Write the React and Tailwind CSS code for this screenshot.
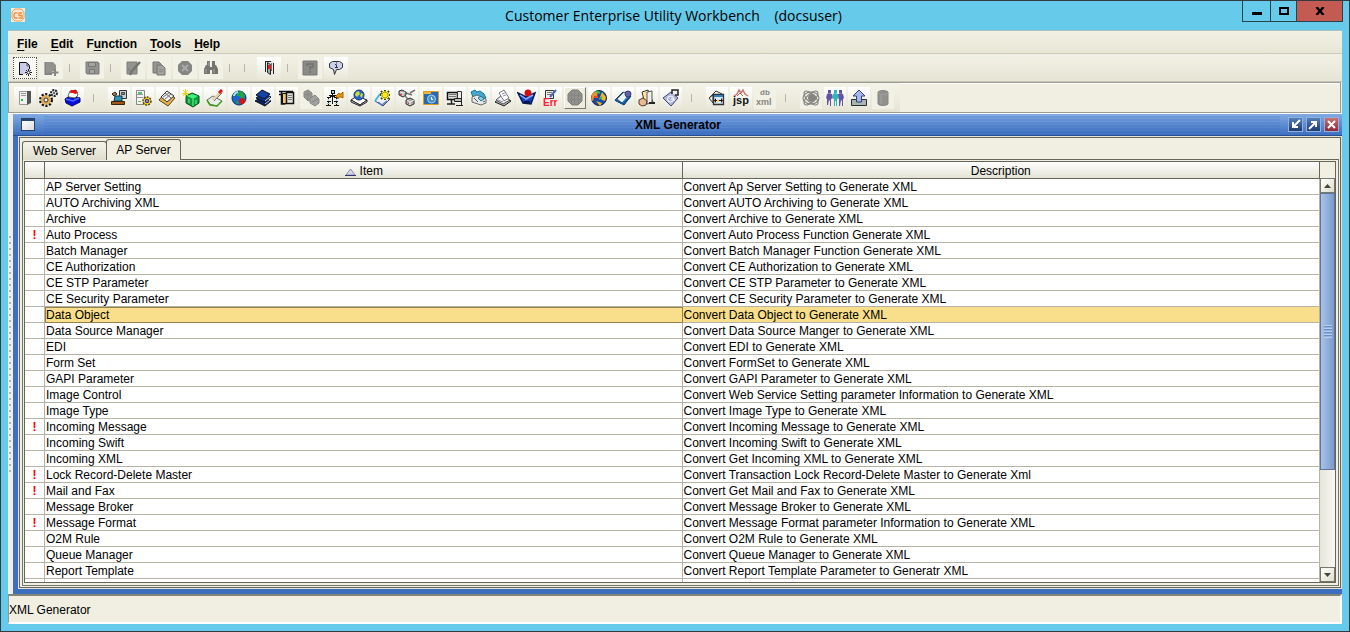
import React from 'react';

const rows = [
  ['', 'AP Server Setting', 'Convert Ap Server Setting to Generate XML'],
  ['', 'AUTO Archiving XML', 'Convert AUTO Archiving to Generate XML'],
  ['', 'Archive', 'Convert Archive to Generate XML'],
  ['!', 'Auto Process', 'Convert Auto Process Function Generate XML'],
  ['', 'Batch Manager', 'Convert Batch Manager Function Generate XML'],
  ['', 'CE Authorization', 'Convert CE Authorization to Generate XML'],
  ['', 'CE STP Parameter', 'Convert CE STP Parameter to Generate XML'],
  ['', 'CE Security Parameter', 'Convert CE Security Parameter to Generate XML'],
  ['', 'Data Object', 'Convert Data Object to Generate XML'],
  ['', 'Data Source Manager', 'Convert Data Source Manger to Generate XML'],
  ['', 'EDI', 'Convert EDI to Generate XML'],
  ['', 'Form Set', 'Convert FormSet to Generate XML'],
  ['', 'GAPI Parameter', 'Convert GAPI Parameter to Generate XML'],
  ['', 'Image Control', 'Convert Web Service Setting parameter Information to Generate XML'],
  ['', 'Image Type', 'Convert Image Type to Generate XML'],
  ['!', 'Incoming Message', 'Convert Incoming Message to Generate XML'],
  ['', 'Incoming Swift', 'Convert Incoming Swift to Generate XML'],
  ['', 'Incoming XML', 'Convert Get Incoming XML to Generate XML'],
  ['!', 'Lock Record-Delete Master', 'Convert Transaction Lock Record-Delete Master to Generate Xml'],
  ['!', 'Mail and Fax', 'Convert Get Mail and Fax to Generate XML'],
  ['', 'Message Broker', 'Convert Message Broker to Generate XML'],
  ['!', 'Message Format', 'Convert Message Format parameter Information to Generate XML'],
  ['', 'O2M Rule', 'Convert O2M Rule to Generate XML'],
  ['', 'Queue Manager', 'Convert Queue Manager to Generate XML'],
  ['', 'Report Template', 'Convert Report Template Parameter to Generatr XML'],
  ['', '', ''],
];

const S = ({ children }) => (
  <svg viewBox="0 0 20 20" className="size-5 shrink-0" fill="none" aria-hidden="true">{children}</svg>
);

const icons = {
  newDoc: <S><path d="M4 4h8l3 3v9H4z" fill="#c9cbe8" /><path d="M4.500 16V4.500h7l3 3V11" stroke="#111" /><path d="M12 5v3h3" stroke="#555" /><path d="M4 16.500h4" stroke="#111" /><path d="M13.500 11v7M10 14.500h7M11 12l5 5M16 12l-5 5" stroke="#222" /><path d="M12.500 13.500h2v2h-2z" fill="#fff" /></S>,
  addDoc: <S><path d="M4 4h8l3 3v6h-4v4H4z" fill="#92928f" /><path d="M5 16h6M4 4v13" stroke="#777774" /><path d="M14 11v7M10.500 14.500h7" stroke="#858582" strokeWidth="2" /></S>,
  save: <S><path d="M4 4h12l1 1v11H5l-1-1z" fill="#92928f" stroke="#7d7d7a" /><path d="M6.500 4.500h7v4h-7zM7.500 11.500h5v4h-5z" fill="#a5a5a2" stroke="#777774" /></S>,
  editPage: <S><path d="M4 4h10v12H4z" fill="#93938f" stroke="#7d7d7a" /><path d="m17 4-8 9-2 4" stroke="#747471" strokeWidth="2.500" /><path d="m5 10 3 4" stroke="#777774" /></S>,
  copy: <S><path d="M4 4h6l2 2v9H4z" fill="#969693" stroke="#747471" /><path d="M8 7h5l3 3v7H8z" fill="#a2a29f" stroke="#747471" /><path d="M10 11.500h4M10 13.500h4" stroke="#8b8b88" /></S>,
  cancel: <S><path d="M7 3h6l4 4v6l-4 4H7l-4-4V7z" fill="#858582" /><path d="m7 7 6 6M13 7l-6 6" stroke="#aaa" strokeWidth="2" /></S>,
  find: <S><path d="M5 7h4v9H3v-5zM11 7h4l2 4v5h-6zM6 3h3v4H6zM11 3h3v4h-3zM9 9h2v3H9z" fill="#747471" /><path d="M5 11v4M13 11v4M8 4v4" stroke="#aaaaa6" /></S>,
  door: <S><path d="M7 3h8v13H7z" fill="#e9e9e5" /><path d="M6.500 3v11M14.500 5v11M6 3.500h6" stroke="#222" /><path d="m8.500 4.500 3 2v10l-3-2z" fill="#aaa" stroke="#222" /><path d="M12.500 5v8" stroke="#777" /><path d="M9 7h3v4H9z" fill="#d82020" /></S>,
  help: <S><path d="M3 3h14v14H3z" fill="#8b8b88" stroke="#777774" /><path d="M7 8V6h6v3h-3v3M10 13v2" stroke="#72726f" strokeWidth="1.500" /></S>,
  bubble: <S><path d="M6.500 3.500h7l3 2v4l-3 2h-3l-2 5-1-5-4-2v-4z" fill="#cdd0ec" stroke="#333" /><path d="M10.500 4.500v1M10.500 6.500v3M9 6.500h1M9 9.500h3" stroke="#333" /></S>,
  server: <S><path d="M4.500 3.500h8v13h-8z" fill="#f0f0ee" stroke="#999" /><path d="M12 3h4v12l-4 2z" fill="#555" /><path d="M6 5.500h5M6 7.500h5" stroke="#999" /><path d="M6 11h2v2H6z" fill="#15c838" /></S>,
  gears: <S><circle cx="7" cy="12" r="5.500" stroke="#111" strokeWidth="3" strokeDasharray="2 1.500" /><circle cx="7" cy="12" r="5" fill="#dfad58" /><circle cx="7" cy="12" r="2" fill="#fff" stroke="#333" /><circle cx="15" cy="5" r="3" fill="#ddd" stroke="#222" strokeWidth="2" strokeDasharray="2 1" /><circle cx="15" cy="5" r="1" fill="#444" /></S>,
  blueBox: <S><path d="m2 11 6-4 9 3v4l-8 4-6-3z" fill="#0610dc" stroke="#080850" /><path d="m5 8 2-5 6-1 2 5-3 3-6-1z" fill="#fff" stroke="#666" /><path d="m7 5 1-3h5l2 3-3 1-2-1z" fill="#e71313" /><path d="m3 11 7 2 6-3" stroke="#536bff" strokeWidth="1.500" /></S>,
  worker: <S><path d="M10.500 2.500h7v8h-7z" fill="#cdd3d4" stroke="#333" /><path d="M12.500 4.500h3v2h-3z" fill="#819497" stroke="#444" /><path d="m3 6 3-2 2 2-3 2z" fill="#b87842" stroke="#222" /><path d="M6 8h7v5H5z" fill="#3194b4" stroke="#173849" /><path d="M2.500 13.500h13v3h-13z" fill="#a05818" stroke="#3d220c" /></S>,
  serverGear: <S><path d="M3.500 2.500h8v14h-8z" fill="#f4f4f2" stroke="#888" /><path d="M4 6.500h6M4 9.500h6" stroke="#999" /><path d="M5 4h4v2H5zM5 13h3v1H5z" fill="#52c369" /><circle cx="14" cy="13" r="4" fill="#ffdc16" stroke="#59460a" strokeWidth="1.500" strokeDasharray="2 1" /><circle cx="14" cy="13" r="1.500" fill="#fff" stroke="#3838a5" strokeWidth="1.500" /></S>,
  tray: <S><path d="m2 12 7-8 9 6-7 8z" fill="#ebb044" stroke="#564121" /><path d="m4 9 6-6 7 5-7 6z" fill="#eee" stroke="#333" /><path d="m6 9 6-4M8 11l6-5M8 5l6 5" stroke="#777" /></S>,
  greenCube: <S><path d="m5 8 6-3 7 3v7l-6 4-7-4z" fill="#0a9d3a" stroke="#064d22" /><path d="m6 8 6 3 5-3-6-2z" fill="#43ef7c" /><path d="M12 11v7M8 11v4M15 12v4" stroke="#7af79c" /><path d="M4.500 1v8M1 5.500h8M2 2l5 6M7 2 2 8" stroke="#e0d020" /></S>,
  brush: <S><path d="m2 12 6-4 9 5-5 5-8-2z" fill="#e8eee7" stroke="#657064" /><path d="m2 12 3 5 7 1 5-5" stroke="#409e1b" strokeWidth="1.500" /><path d="M8 12 16 4" stroke="#e8cfa8" strokeWidth="3" /><path d="M9 13 17 5" stroke="#777" /><path d="M14 5 17 2" stroke="#e11" strokeWidth="3" /></S>,
  globeDot: <S><circle cx="10" cy="10" r="7" fill="#1868c5" stroke="#0c3062" /><path d="m8 4 5-1 3 4-1 3h-3l-2-2H8zM8 12l2 4-3-1z" fill="#21a34c" /><path d="M5 8c0-2 2-4 4-4" stroke="#a6ecf8" strokeWidth="2" /><circle cx="13" cy="13" r="3" fill="#d71515" /></S>,
  books: <S><path d="m2 13 7-4 9 4-6 5z" fill="#082265" stroke="#111" /><path d="m3 10 7-5 8 4-6 5z" fill="#0a3898" stroke="#111" /><path d="m3 7 6-5 8 4-6 5z" fill="#1244a8" stroke="#111" /><path d="m12 13 5-4M12 16l5-4" stroke="#ccc" /></S>,
  documents: <S><path d="M2 3.500h14M2 6.500h3M4.500 4v12h4" stroke="#111" strokeWidth="1.500" /><path d="M5.500 5.500h4v10h-4z" fill="#f3c95f" stroke="#111" /><path d="M9.500 4.500h7v11h-7z" fill="#e4e4df" stroke="#111" strokeWidth="1.500" /><path d="M11 7.500h4M11 9.500h4M11 11.500h4" stroke="#777" /></S>,
  disabledGears: <S><path d="m3 4 4-2 4 3v6l-4 2-4-4z" fill="#999996" stroke="#858582" /><path d="m9 10 5-3 4 4v4l-4 3-5-3z" fill="#a1a19e" stroke="#858582" /><path d="M7 3v9M4 7l6-1M11 14l6-3" stroke="#858582" /></S>,
  tree: <S><path d="M7.500 3v13M3.500 10v7M11.500 10v7M4 7.500h8M2 9.500h4M9 9.500h4M2 13.500h4M9 13.500h4M1 17.500h5M9 17.500h5" stroke="#111" /><path d="M6 2h4v4H6zM5 7h5v2H5z" fill="#111" /><path d="M7 3h2v2H7zM3 11h1v2H3zM11 11h1v2h-1zM2 15h3v1H2zM10 15h3v1h-3z" fill="#9ed3dc" /><path d="m11 8 3-3v1h2l2-2v6l-2-1h-2l-1 2z" fill="#ed980e" stroke="#a85f00" /></S>,
  globeDisk: <S><path d="m2 12 6-4 10 4-7 5z" fill="#fff" stroke="#222" /><path d="m2 12 9 5 7-5v2l-7 4-9-4z" fill="#ddd" stroke="#222" /><circle cx="10" cy="7" r="5" fill="#2062d8" stroke="#213461" /><path d="m7 4 3-1 1 3-3 3-2-2zM12 5l2 1-1 4-2-2z" fill="#c5dc3a" /></S>,
  starDoc: <S><path d="m2 13 6-8 9 6-7 7z" fill="#eee" stroke="#447" /><path d="m2 13 5-7" stroke="#48b9e5" strokeWidth="2" /><path d="m5 14 4 3 5-4" stroke="#5577cc" strokeWidth="1.500" /><path d="M12 2v10M7 7h10M8 3l8 8M16 3l-8 8" stroke="#514c00" strokeWidth="2" /><path d="M12 3v8M8 7h8M9 4l6 6M15 4l-6 6" stroke="#ffec1c" strokeWidth="1.300" /></S>,
  nodes: <S><path d="m6 4 9 3M13 5l5-3M8 8l4 4" stroke="#777" strokeWidth="1.500" /><path d="m2 3 3-1 4 2v3L6 9 2 7zM9 12l4-2 4 2v4l-4 2-4-2z" fill="#aaa" stroke="#333" /><path d="m3 4 3 1 2-1M10 12l3 2 4-2M6 5v3M13 14v3" stroke="#eee" /><path d="M3 6h2v1H3zM11 15h1v1h-1z" fill="#e33" /></S>,
  clock: <S><path d="M2.500 3.500h15v13h-15z" fill="#2c68ad" stroke="#df9b22" /><path d="M3 4h7v2H3z" fill="#e9b63d" /><circle cx="10.500" cy="11" r="4" fill="#4b91c9" stroke="#9bd0ee" /><path d="M10.500 9v2.500H12" stroke="#fff" /></S>,
  monitor: <S><path d="M2.500 4.500h10v7h-10z" fill="#e0e0df" stroke="#111" strokeWidth="1.500" /><path d="M4 6.500h7M4 8.500h7" stroke="#777" /><path d="M6.500 12v4M2 16h8" stroke="#222" strokeWidth="1.500" /><path d="M12.500 3.500h4v8h-4z" fill="#eee" stroke="#333" /><path d="M9.500 10.500h7v3h-7z" fill="#b9bab9" stroke="#222" /><path d="M11 17.500h7M16.500 13v4" stroke="#222" /></S>,
  phones: <S><path d="m2 4 4-2 2 2 3-1 4 3 2 4-3 2-6-4-4 1z" fill="#42a9d2" stroke="#147693" /><path d="m3 9 5-2 9 4v4l-5 2-9-3z" fill="#e5e9e9" stroke="#666" /><path d="m9 10 3-2 3 3-3 2z" fill="#7fd0ea" stroke="#317187" /><path d="m5 10 4 4M14 14l2-1" stroke="#555" /></S>,
  cards: <S><path d="m2 14 7-6 9 5-7 5z" fill="#aaa" stroke="#222" /><path d="m3 12 6-5 8 5-7 4z" fill="#f2f2fa" stroke="#555" /><path d="m6 5 5-3 5 8-5 3z" fill="#fff" stroke="#777" /><path d="m5 12 5 2M9 6l3-1M10 8l3-1" stroke="#8d8dad" /></S>,
  reader: <S><path d="m1 5 8 4 9-4-4 11-8-1z" fill="#1540bf" stroke="#071a5c" strokeWidth="1.500" /><circle cx="11" cy="5" r="3.500" fill="#cf1010" /><path d="m3 7 6 4 7-4" stroke="#86abff" strokeWidth="1.500" /><path d="M7 14h6" stroke="#04124d" strokeWidth="2" /></S>,
  error: <S><path d="M4.500 2.500h8v8h-8z" fill="#eee" stroke="#333" /><path d="M6 4.500h5M6 6.500h4" stroke="#777" /><path d="m9 9 6-7" stroke="#4d68b5" strokeWidth="2" /><text x="2" y="18" className="fill-[#ff1a35] text-[10px] font-bold">Err</text></S>,
  sphere: <S><path d="M7 2h6l4 4v7l-4 4H7l-4-4V6z" fill="#91918d" stroke="#7b7b77" /><path d="M6.500 4v11M9.500 3v14M13.500 4v12M3 7.500h13M3 11.500h13" stroke="#858582" /></S>,
  globe: <S><circle cx="10" cy="10" r="7.500" fill="#1548a7" stroke="#1b2747" /><path d="m3 6 4-3 2 1-1 4-3 1-1 4-2-1z" fill="#e99323" /><path d="m13 4 4 5-1 4-3-1-2-3zM7 13l6 2-2 3z" fill="#f0b71f" /><path d="m7 3 4 2M13 9l-3 2" stroke="#30b95c" strokeWidth="2" /><path d="M5 9h4" stroke="#f1402d" strokeWidth="2" /></S>,
  bookSearch: <S><path d="m2 12 8-8 8 4-7 9z" fill="#247acb" stroke="#173954" /><path d="m4 11 7-7 5 3-7 8z" fill="#eef4f7" stroke="#356b92" /><circle cx="15" cy="6" r="3" fill="#6362a7" stroke="#36356d" /><path d="m2 12 8 4 7-7" stroke="#174f91" strokeWidth="1.500" /></S>,
  hand: <S><path d="m5 4 6-2 5 12-8 2z" fill="#ffe59c" stroke="#333" /><path d="m10 4 5-1v12l-5 1z" fill="#eee" stroke="#555" /><path d="m2 12 4-2 4 3-1 4-4 1-3-2z" fill="#e8ba93" stroke="#583b24" /><path d="M12 15h6" stroke="#222" strokeWidth="2" /></S>,
  at: <S><path d="m2 10 8-6 7 6-7 8z" fill="#afb7db" stroke="#444b78" /><path d="M11 6V2h6v5h-3" fill="#eee" stroke="#222" strokeWidth="1.500" /><circle cx="9.500" cy="11" r="3" stroke="#fff" /><path d="M10 11h3v2" stroke="#fff" /></S>,
  folder: <S><path d="m2 10 7-7 6 3" stroke="#333" /><path d="m2 10 4 5V7z" fill="#eee" stroke="#333" /><path d="M6.500 6.500h10v10h-10z" fill="#dce7ef" stroke="#333" strokeWidth="1.300" /><path d="M7 7h9v2H7z" fill="#2e7fc3" /><path d="M8 12.500h7" stroke="#111" /><path d="M9 10v5l-2-2.500zM14 10v5l2-2.500z" fill="#111" /><path d="M10 12h2v2h-2z" fill="#ffd723" /></S>,
  jsp: <S><path d="m3 8 3-2 2-4 2 3 2-3 2 4 3 2" stroke="#c77d72" strokeWidth="1.500" /><path d="m6 8 3-3 3 3" stroke="#ad6963" /><text x="2" y="16" className="fill-[#111111] text-[11px] font-bold">jsp</text></S>,
  xml: <S><text x="5" y="7" className="fill-[#858582] text-[8px] font-bold">db</text><text x="1" y="17" className="fill-[#858582] text-[9px] font-bold">xml</text></S>,
  orbit: <S><g stroke="#858582" strokeWidth="1.200"><ellipse cx="10" cy="10" rx="4" ry="9" transform="rotate(45 10 10)" /><ellipse cx="10" cy="10" rx="4" ry="9" transform="rotate(-45 10 10)" /><ellipse cx="10" cy="10" rx="8" ry="6" /></g><circle cx="11" cy="10" r="4" fill="#858582" /></S>,
  people: <S><g fill="#6554a5"><path d="M3 2h3v3H3zM14 2h3v3h-3z" /><path d="m2 6 2-1 3 1 1 4-2 1v7H5v-5l-1-1-1 5H2v-6l-1-1zM13 6l3-1 2 1 1 4-1 1v7h-1v-5l-1-1-1 6h-1v-7l-1-1z" /></g><path d="M9 2h3v3H9z" fill="#36b3ba" /><path d="m8 6 2-1 3 1 1 4-2 1v7h-1v-5h-1v5H9v-7l-2-1z" fill="#36b3ba" /></S>,
  upload: <S><path d="M2.500 11.500h15v6h-15z" fill="#aab4b0" stroke="#273133" /><path d="m10 2 6 6h-3.500v6h-5V8H4z" fill="#a7b6ef" stroke="#35406c" /></S>,
  cylinder: <S><path d="M5 4c2-2 8-2 10 0v12c-2 2-8 2-10 0z" fill="#91918d" stroke="#858582" /><path d="M5 5c2 2 8 2 10 0M8 7v9" stroke="#a4a4a0" /></S>,
};

const topTools = [
  ['New', 'newDoc', 'focus'], ['Add', 'addDoc', 'off'], null,
  ['Save', 'save', 'off'], null, ['Edit page', 'editPage', 'off'],
  ['Copy', 'copy', 'off'], ['Cancel', 'cancel', 'off'], ['Find', 'find', 'off'], null, 'wide',
  ['Exit', 'door', ''], null, ['Help contents', 'help', 'off'], ['About', 'bubble', ''],
];

const moduleTools = [
  ['Server', 'server'], ['Processes', 'gears'], ['Packages', 'blueBox'], null,
  ['Workstation', 'worker'], ['Server settings', 'serverGear'], ['Document tray', 'tray'], ['New object', 'greenCube'],
  ['Form editor', 'brush'], ['Web', 'globeDot'], ['Library', 'books'], ['Templates', 'documents'],
  ['Automation', 'disabledGears', 'off'], ['Structure', 'tree'], ['Web drive', 'globeDisk'], ['Generate document', 'starDoc'],
  ['Connections', 'nodes'], ['Schedule', 'clock'], ['Terminals', 'monitor'], ['Messages', 'phones'], ['Cards', 'cards'],
  ['Reader', 'reader'], ['Error log', 'error'], ['XML Generator', 'sphere', 'pressed'], ['International', 'globe'],
  ['Browse book', 'bookSearch'], ['Manual', 'hand'], ['Mail', 'at'], null,
  ['Folder', 'folder'], ['JSP', 'jsp'], ['Database XML', 'xml', 'off'], null,
  ['Orbit', 'orbit', 'off'], ['Users', 'people'], ['Upload', 'upload'], ['Database', 'cylinder', 'off'],
];

const look = {
  undefined: 'bg-linear-to-b from-white to-[#e8e7d8]',
  '': 'bg-linear-to-b from-white to-[#e8e7d8]',
  off: 'bg-[#f2f1e6]',
  focus: 'bg-linear-to-b from-white to-[#f3f2e8] border border-dotted border-[#555]',
  pressed: 'bg-[#eeecdf] border border-t-white border-l-white border-r-[#77776f] border-b-[#77776f]',
};

const Rule = () => <span className="h-2 w-px bg-[#b5b5aa]" />;

function WindowButton({ label, tone, d }) {
  return (
    <button aria-label={label} className={`flex size-[15px] items-center justify-center border border-[#8fb0e0] bg-linear-to-b ${tone}`}>
      <svg viewBox="0 0 11 11" className="size-[11px]" fill="none" stroke="#fff" strokeWidth="2"><path d={d} /></svg>
    </button>
  );
}

function ScrollArrow({ label, d }) {
  return (
    <button aria-label={label} className="flex h-[15px] w-full shrink-0 items-center justify-center border border-[#77776a] bg-linear-to-br from-white to-[#deddcb]">
      <svg viewBox="0 0 7 4" className="h-1 w-[7px]"><path d={d} fill="#444438" /></svg>
    </button>
  );
}

export default function App() {
  return (
    <div className="flex h-screen flex-col border border-[#333b40] bg-[#66caea] px-[7px] pb-[7px] font-['Liberation_Sans',Arial,sans-serif] text-[12px] text-black">
      <header className="flex h-[29px] shrink-0 items-start">
        <svg viewBox="0 0 14 14" className="mt-[7px] ml-[3px] size-[14px]" fill="none">
          <path d="M0 0h14v14H0z" fill="#fbe9d5" />
          <path d="M4 1h6l3 3v6l-3 3H4l-3-3V4z" stroke="#f0a05a" />
          <path d="M6.500 5H4L3 6v3l1 1h2.500M11 5H8v2.500h3V10H7.500" stroke="#ee8f3f" strokeWidth="1.300" />
        </svg>
        <h1 className="flex-1 self-center pl-20 text-center font-['Open_Sans',sans-serif] text-[14px] whitespace-pre">Customer Enterprise Utility Workbench    (docsuser)</h1>
        <div className="-mr-px flex h-[21px] border border-t-0 border-[#28434e]">
          <button aria-label="Minimize" className="flex w-7 items-center justify-center border-r border-[#28434e]"><span className="mt-[5px] h-[3px] w-[10px] bg-black" /></button>
          <button aria-label="Maximize" className="flex w-[26px] items-center justify-center border-r border-[#28434e]"><span className="h-2 w-[10px] border-2 border-black" /></button>
          <button aria-label="Close" className="flex w-[45px] items-center justify-center bg-[#c35b52]"><svg viewBox="0 0 10 8" className="h-2 w-[10px]"><path d="m1.500 0 7 8M8.500 0l-7 8" stroke="#000" strokeWidth="2.400" /></svg></button>
        </div>
      </header>

      <div className="flex min-h-0 flex-1 flex-col border-t border-[#a9bfc0] bg-[#f0efe2]">
        <nav className="flex h-[23px] shrink-0 items-center gap-[13px] border-b border-[#cbcabd] bg-linear-to-b from-[#f1f0e4] to-[#e8e7d6] px-[9px] pt-[3px] font-bold">
          {[['', 'F', 'ile'], ['', 'E', 'dit'], ['F', 'u', 'nction'], ['', 'T', 'ools'], ['', 'H', 'elp']].map(([a, u, b]) => (
            <button key={u + b} className="leading-4">{a}<span className="underline underline-offset-2">{u}</span>{b}</button>
          ))}
        </nav>

        <div className="flex h-7 shrink-0 items-center border-b border-[#c6c5b8] bg-linear-to-b from-[#f2f1e6] to-[#e6e5d4] pl-[5px]">
          {topTools.map((t, i) => t === null || t === 'wide'
            ? <span key={i} className={`flex pl-1 ${t ? 'w-[17px]' : 'w-[15px]'}`}><Rule /></span>
            : <button key={i} aria-label={t[0]} disabled={t[2] === 'off'} className={`mr-[2px] flex h-[22px] w-6 items-center justify-center ${look[t[2]]}`}>{icons[t[1]]}</button>)}
        </div>

        <div className="mr-px flex h-[31px] shrink-0 border border-[#9d9c93] shadow-[inset_1px_1px_0_#fff]">
          <div className="flex items-center bg-linear-to-b from-[#f4f3e9] to-[#e6e5d4] pr-1 pl-[5px]">
            {moduleTools.map((t, i) => t === null
              ? <span key={i} className="flex w-[22px] pl-[7px]"><Rule /></span>
              : <button key={i} aria-label={t[0]} disabled={t[2] === 'off'} className={`mr-[2px] flex h-[22px] w-[22px] items-center justify-center ${look[t[2]]}`}>{icons[t[1]]}</button>)}
          </div>
        </div>

        <div className="flex min-h-0 flex-1 border-t border-white">
          <div className="flex w-[5px] shrink-0 items-center justify-center">
            <div className="h-[236px] w-[3px] bg-[radial-gradient(circle_at_1px_1px,#b5b4a6_1px,transparent_1px)] bg-size-[3px_6px]" />
          </div>
          <section className="flex min-h-0 min-w-0 flex-1 flex-col bg-[#3c6fbe] pb-[5px]">
            <div className="flex h-[22px] shrink-0 items-center border-b border-[#284f91] bg-linear-to-b from-[#82aae4] to-[#3d70bf] pr-[3px] pl-2">
              <span className="h-[13px] w-[14px] border border-[#27446f] border-t-[3px] bg-linear-to-br from-white to-[#dcdcdc]" />
              <h2 className="ml-[9px] flex-1 bg-[repeating-linear-gradient(to_bottom,transparent_0,transparent_1px,rgba(40,90,180,0.15)_1px,rgba(40,90,180,0.15)_3px)] pt-px pl-8 text-center leading-[18px] font-bold">XML Generator</h2>
              <div className="ml-2 flex gap-[3px]">
                <WindowButton label="Restore" tone="from-[#5580ba] to-[#203d70]" d="M10 1 4 7M3 3v5h5" />
                <WindowButton label="Expand" tone="from-[#5580ba] to-[#203d70]" d="m1 10 6-6M3 3h5v5" />
                <WindowButton label="Close XML Generator" tone="from-[#c8736f] to-[#8f2837]" d="m2 2 7 7M9 2 2 9" />
              </div>
            </div>

            <div className="ml-[5px] flex min-h-0 flex-1 flex-col border border-[#e3e2d4] bg-[#f0efe2]">
              <div className="flex min-h-0 flex-1 flex-col border border-[#66655a] pt-px pr-px pb-px pl-[2px]">
                <div role="tablist" className="flex h-[21px] shrink-0 items-end">
                  <button role="tab" aria-selected="false" className="h-[19px] w-[85px] rounded-t-[3px] border border-b-0 border-[#66655a] bg-linear-to-b from-[#f5f4ea] to-[#dfdecd] leading-[18px]">Web Server</button>
                  <button role="tab" aria-selected="true" className="-ml-px h-[21px] w-[75px] rounded-t-[3px] border border-b-0 border-[#66655a] bg-[#f0efe2] leading-5">AP Server</button>
                  <span className="h-px flex-1 bg-[#66655a]" />
                </div>
                <div className="flex min-h-0 flex-1 flex-col border border-t-0 border-[#77766a] p-px pb-[2px] pr-[2px]">
                  <div className="flex min-h-0 flex-1 border border-[#66655a] bg-white">
                    <div className="min-w-0 flex-1 overflow-hidden">
                      <table className="w-full table-fixed border-separate border-spacing-0 text-left">
                        <colgroup><col className="w-5" /><col /><col /></colgroup>
                        <thead>
                          <tr className="h-4 bg-linear-to-b from-white to-[#e2e1d2]">
                            <th aria-label="Status" className="border-r border-b border-[#66655a] p-0" />
                            <th className="border-r border-b border-[#66655a] p-0 pt-[3px] text-center leading-[13px] font-normal">
                              <span className="flex items-center justify-center gap-1 pl-px">
                                <svg viewBox="0 0 11 8" className="h-2 w-[11px]"><path d="m5.500 1 4.500 6H1z" fill="#d6d6ec" stroke="#8888a5" /><path d="M0 7.500h11" stroke="#333377" /></svg>
                                Item
                              </span>
                            </th>
                            <th className="border-r border-b border-[#66655a] p-0 pt-[3px] text-center leading-[13px] font-normal">Description</th>
                          </tr>
                        </thead>
                        <tbody>
                          {rows.map(([flag, item, description], i) => (
                            <tr key={i} className="h-4">
                              <td className="border-r border-b border-[#b5b4a6] p-0 pt-px text-center leading-[14px] font-bold text-[#ff0000]">{flag}</td>
                              <td className={`border-r border-b p-0 pt-px pl-px leading-[14px] whitespace-nowrap ${item === 'Data Object' ? 'border-[#94804a] bg-[#f9df8b] shadow-[inset_1px_1px_0_#94804a]' : 'border-[#b5b4a6]'}`}>{item}</td>
                              <td className={`border-r border-b border-[#b5b4a6] p-0 pt-px pl-px leading-[14px] whitespace-nowrap ${item === 'Data Object' ? 'bg-[#f9df8b]' : ''}`}>{description}</td>
                            </tr>
                          ))}
                        </tbody>
                      </table>
                    </div>
                    <div className="flex w-[15px] shrink-0 flex-col bg-[#f0efe2]">
                      <div className="h-4 shrink-0" />
                      <ScrollArrow label="Scroll up" d="M0 4 3.500 0 7 4z" />
                      <div className="min-h-0 flex-1 bg-linear-to-r from-[#e6e5da] to-[#f8f8f4]">
                        <div className="flex h-[74%] items-center justify-center border border-[#5b759e] bg-linear-to-r from-[#a9c2e8] to-[#7d9bca]">
                          <span className="h-[13px] w-2 bg-[repeating-linear-gradient(to_bottom,#b8cdec_0,#b8cdec_1px,#6e8fc3_1px,#6e8fc3_2px,#94b0da_2px,#94b0da_3px)]" />
                        </div>
                      </div>
                      <ScrollArrow label="Scroll down" d="M0 0 3.500 4 7 0z" />
                    </div>
                  </div>
                </div>
              </div>
            </div>
          </section>
        </div>
        <footer className="flex h-[30px] shrink-0 items-center border-t-2 border-r-2 border-b-2 border-l border-t-[#85847a] border-r-white border-b-white border-l-[#99988c] pt-px leading-4">XML Generator</footer>
      </div>
    </div>
  );
}
